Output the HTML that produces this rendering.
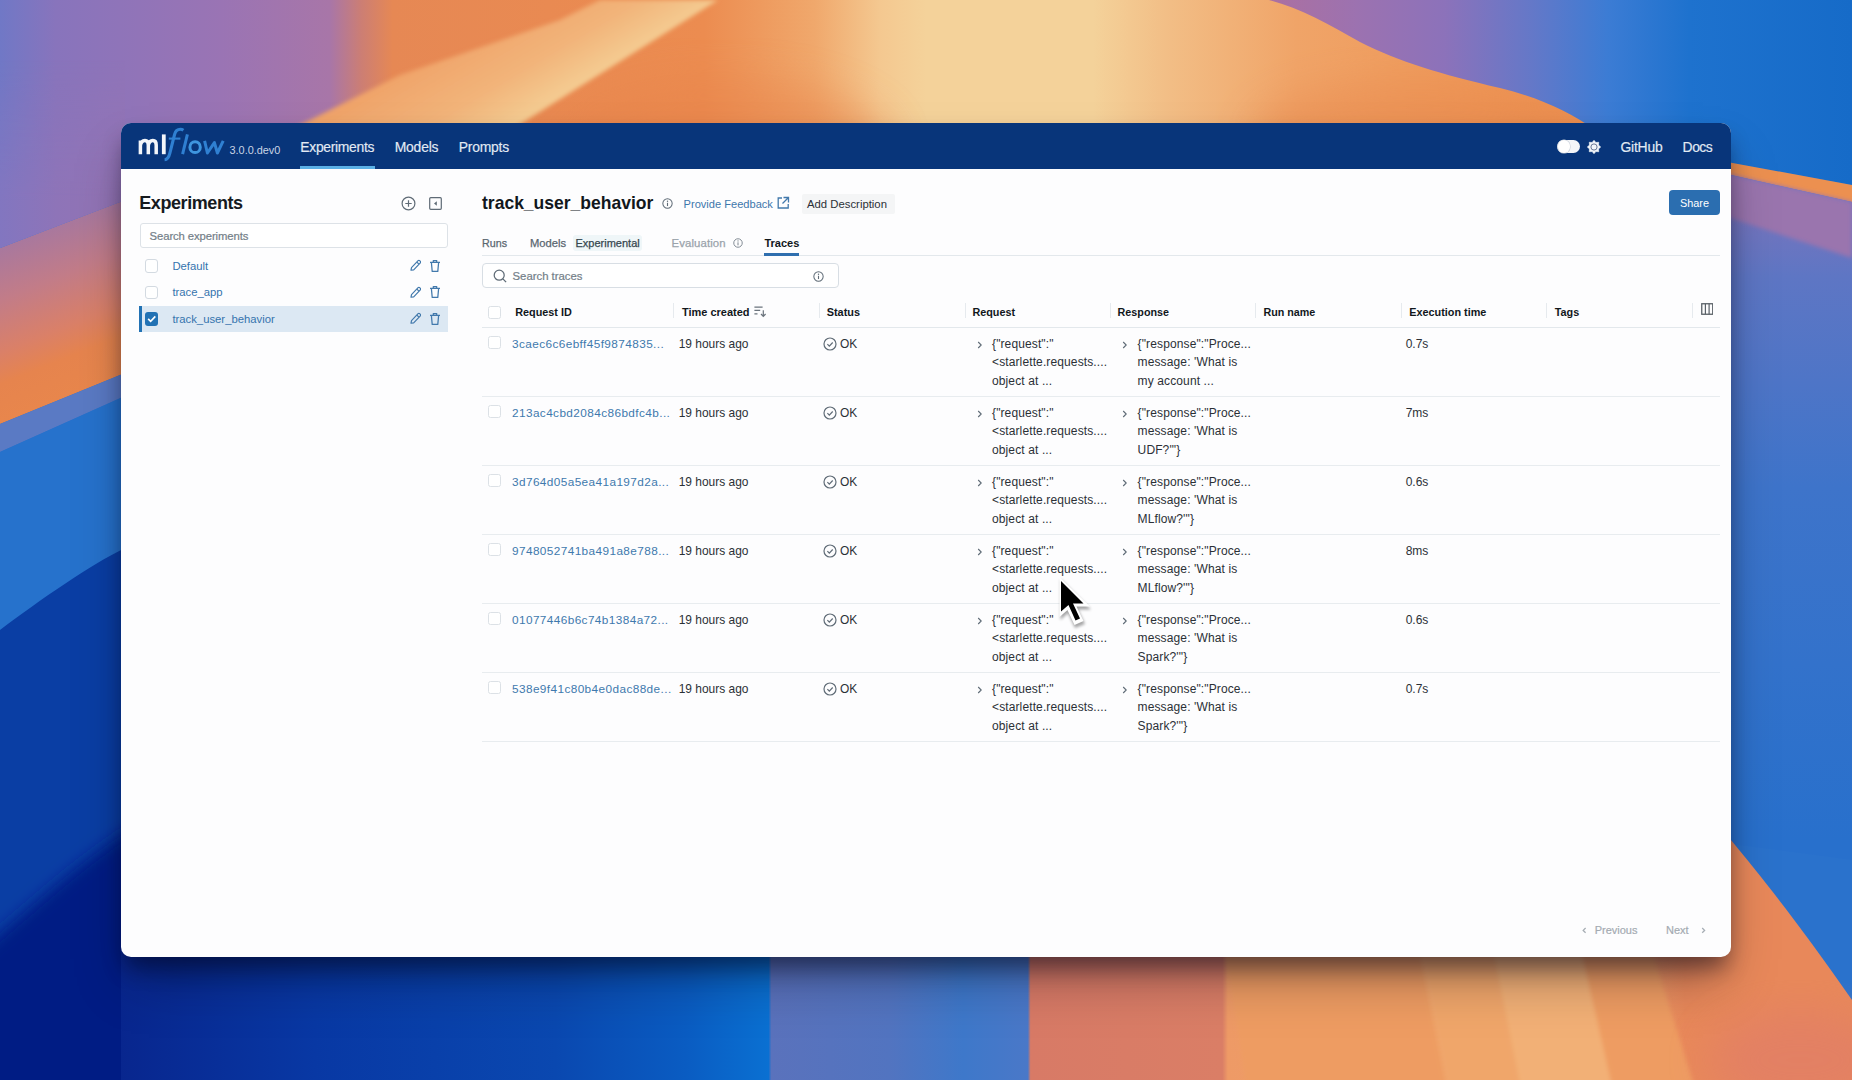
<!DOCTYPE html>
<html><head><meta charset="utf-8"><style>
html,body{margin:0;padding:0;width:1852px;height:1080px;overflow:hidden;}
body{position:relative;font-family:"Liberation Sans", sans-serif;background:#2d5fb8;}
.abs{position:absolute;}
.t{position:absolute;white-space:pre;}
#win{position:absolute;background:#FDFDFE;border-radius:10px;box-shadow:0 14px 22px -4px rgba(0,0,20,0.45), 0 30px 50px -10px rgba(0,0,20,0.35);}
#nav{position:absolute;background:#08357A;border-radius:10px 10px 0 0;}
</style></head><body>
<svg class="abs" style="left:0;top:0" width="1852" height="1080" viewBox="0 0 1852 1080">
<defs>
<filter id="b2" x="-5%" y="-5%" width="110%" height="110%"><feGaussianBlur stdDeviation="2"/></filter>
<filter id="b20" x="-30%" y="-30%" width="160%" height="160%"><feGaussianBlur stdDeviation="20"/></filter>
<filter id="b8" x="-30%" y="-30%" width="160%" height="160%"><feGaussianBlur stdDeviation="8"/></filter>
<filter id="b4" x="-5%" y="-5%" width="110%" height="110%"><feGaussianBlur stdDeviation="4"/></filter>
<linearGradient id="gTop" x1="0" y1="0" x2="1852" y2="0" gradientUnits="userSpaceOnUse">
<stop offset="0" stop-color="#7078C6"/>
<stop offset="0.03" stop-color="#8874BC"/>
<stop offset="0.12" stop-color="#9A74B4"/>
<stop offset="0.178" stop-color="#A876A8"/>
<stop offset="0.195" stop-color="#CC7E74"/>
<stop offset="0.212" stop-color="#E68854"/>
<stop offset="0.38" stop-color="#EC8C50"/>
<stop offset="0.44" stop-color="#F0A86C"/>
<stop offset="0.475" stop-color="#F4C890"/>
<stop offset="0.5" stop-color="#F4D29A"/>
<stop offset="0.59" stop-color="#F4D29A"/>
<stop offset="0.63" stop-color="#F2BE86"/>
<stop offset="0.7" stop-color="#F0A468"/>
<stop offset="0.8" stop-color="#EE9858"/>
<stop offset="0.86" stop-color="#EC9050"/>
<stop offset="1" stop-color="#EC9050"/>
</linearGradient>
<linearGradient id="gRidge" x1="1270" y1="0" x2="1852" y2="0" gradientUnits="userSpaceOnUse">
<stop offset="0" stop-color="#AC70A0"/>
<stop offset="0.15" stop-color="#9C72B0"/>
<stop offset="0.3" stop-color="#8C72BA"/>
<stop offset="0.45" stop-color="#6478C8"/>
<stop offset="0.58" stop-color="#3C7CD4"/>
<stop offset="0.72" stop-color="#1E72CE"/>
<stop offset="1" stop-color="#166BC8"/>
</linearGradient>
<linearGradient id="gBand" x1="400" y1="75" x2="450" y2="159" gradientUnits="userSpaceOnUse">
<stop offset="0" stop-color="#F0A46A"/>
<stop offset="0.6" stop-color="#F2B47A"/>
<stop offset="1" stop-color="#F4CA90"/>
</linearGradient>
<linearGradient id="gLeftTop" x1="0" y1="0" x2="125" y2="0" gradientUnits="userSpaceOnUse">
<stop offset="0" stop-color="#8276C0"/>
<stop offset="0.45" stop-color="#8E74B8"/>
<stop offset="1" stop-color="#9474B4"/>
</linearGradient>
<linearGradient id="gLeftBand" x1="0" y1="248" x2="60" y2="399" gradientUnits="userSpaceOnUse">
<stop offset="0" stop-color="#A8789E"/>
<stop offset="0.3" stop-color="#C27C88"/>
<stop offset="0.6" stop-color="#DA8068"/>
<stop offset="0.78" stop-color="#E6844E"/>
<stop offset="1" stop-color="#E8864C"/>
</linearGradient>
<linearGradient id="gBot" x1="0" y1="0" x2="1852" y2="0" gradientUnits="userSpaceOnUse">
<stop offset="0" stop-color="#061E84"/>
<stop offset="0.065" stop-color="#08268E"/>
<stop offset="0.17" stop-color="#0838A4"/>
<stop offset="0.3" stop-color="#0A48B0"/>
<stop offset="0.37" stop-color="#0A5CC2"/>
<stop offset="0.415" stop-color="#0A70D2"/>
<stop offset="0.4165" stop-color="#5A72BC"/>
<stop offset="0.48" stop-color="#5274C0"/>
<stop offset="0.52" stop-color="#3E78CA"/>
<stop offset="0.555" stop-color="#4A78C8"/>
<stop offset="0.5565" stop-color="#D87A66"/>
<stop offset="0.66" stop-color="#DA7E66"/>
<stop offset="0.663" stop-color="#EE9A66"/>
<stop offset="0.77" stop-color="#F0A46C"/>
<stop offset="0.86" stop-color="#F2A870"/>
<stop offset="0.91" stop-color="#E8885A"/>
<stop offset="1" stop-color="#E8845A"/>
</linearGradient>
<linearGradient id="gRight" x1="0" y1="200" x2="0" y2="840" gradientUnits="userSpaceOnUse">
<stop offset="0" stop-color="#7A74BC"/>
<stop offset="0.12" stop-color="#5E76C4"/>
<stop offset="0.45" stop-color="#3E74CA"/>
<stop offset="1" stop-color="#2870CC"/>
</linearGradient>
<linearGradient id="gTopL" x1="0" y1="0" x2="1852" y2="0" gradientUnits="userSpaceOnUse">
<stop offset="0" stop-color="#7078C6"/>
<stop offset="0.03" stop-color="#8874BC"/>
<stop offset="0.12" stop-color="#9A74B4"/>
</linearGradient>
<linearGradient id="gFade" x1="0" y1="60" x2="0" y2="200" gradientUnits="userSpaceOnUse">
<stop offset="0" stop-color="#000"/>
<stop offset="1" stop-color="#fff"/>
</linearGradient>
<mask id="mFade" maskUnits="userSpaceOnUse" x="0" y="0" width="200" height="300"><rect x="0" y="0" width="200" height="300" fill="url(#gFade)"/></mask>
</defs>
<!-- base blue -->
<rect x="0" y="0" width="1852" height="1080" fill="#2A72CC"/>
<!-- left strip -->
<polygon points="0,248 125,200 125,373 0,424" fill="url(#gLeftBand)"/>
<polygon points="0,424 125,373 125,396 0,452" fill="#5A7AC4"/>
<rect x="0" y="530" width="145" height="550" fill="#0A3EA4"/>
<path d="M0,452 L125,396 L125,548 C90,565 40,600 0,630 Z" fill="#2672CC"/>
<path d="M-20,950 C40,900 80,860 145,820 L145,1100 L-20,1100 Z" fill="#061E84" filter="url(#b8)"/>
<!-- right strip -->
<polygon points="1700,0 1852,0 1852,185 1700,157" fill="url(#gRidge)"/>
<polygon points="1700,157 1852,185 1852,202 1700,168" fill="#EC9050"/>
<polygon points="1700,168 1852,202 1852,860 1700,840" fill="url(#gRight)"/>
<polygon points="1700,168 1852,202 1852,258 1700,208" fill="#9A74AE" filter="url(#b2)"/>
<!-- top strip -->
<rect x="0" y="0" width="1852" height="135" fill="url(#gTop)"/>
<ellipse cx="1420" cy="135" rx="170" ry="55" fill="#E8864C" opacity="0.45" filter="url(#b20)"/>
<path d="M1269,0 C1300,8 1330,25 1360,42 C1400,62 1440,74 1500,88 C1540,98 1570,112 1595,130 L1600,135 L1852,135 L1852,0 Z" fill="url(#gRidge)"/>
<ellipse cx="720" cy="150" rx="170" ry="70" fill="#E8844C" opacity="0.5" filter="url(#b20)"/>
<polygon points="280,135 400,75 560,20 600,0 718,0 503,135" fill="url(#gBand)" filter="url(#b2)"/>
<polygon points="0,0 125,0 125,200 0,248" fill="url(#gTopL)"/>
<polygon points="0,60 125,60 125,200 0,248" fill="url(#gLeftTop)" opacity="1" mask="url(#mFade)"/>
<!-- bottom strip -->
<rect x="121" y="950" width="1610" height="130" fill="url(#gBot)"/>
<path d="M1700,820 L1731,840 C1760,875 1800,925 1852,1000 L1852,1080 L1700,1080 Z" fill="#E8885A"/>
<g filter="url(#b2)">
<polygon points="1225,945 1418,945 1446,1085 1246,1085" fill="#EE9C62"/>
<polygon points="1418,945 1492,945 1520,1085 1446,1085" fill="#F0A66A"/>
<polygon points="1492,945 1580,945 1612,1085 1520,1085" fill="#F2B076"/>
<polygon points="1580,945 1650,945 1694,1085 1612,1085" fill="#EE9C62"/>
</g>
<ellipse cx="1800" cy="1060" rx="90" ry="50" fill="#E07C6A" opacity="0.6" filter="url(#b20)"/>
</svg>

<div id="win" style="left:121px;top:123px;width:1610px;height:834px"></div>
<div id="nav" style="left:121px;top:123px;width:1610px;height:46px"></div>
<svg class="abs" style="left:130px;top:123px" width="100" height="46" viewBox="130 123 100 46">
<g fill="none" stroke-linecap="butt">
<path d="M140.4,154.2 V140.5 M140.4,145.6 C140.8,142.4 142.6,140.4 145,140.4 C147.4,140.4 148.3,142 148.3,145 V154.2 M148.3,145.4 C148.8,142.3 150.6,140.4 152.9,140.4 C155.3,140.4 156.2,142 156.2,145 V154.2" stroke="#F3F6FA" stroke-width="3.5"/>
<path d="M163.8,134.4 V154.2" stroke="#F3F6FA" stroke-width="3.8"/>
<path d="M164.6,159.8 C167.6,159.6 168.8,157.6 169.8,153.4 L174.6,134.4 C175.6,130.4 177.6,129.2 180.4,129.2 C181.6,129.2 182.6,129.6 183.4,130.2" stroke="#2F80D2" stroke-width="3.1"/>
<path d="M168.8,138.6 H180.4" stroke="#2F80D2" stroke-width="2.1"/>
<path d="M182.6,154.2 L187.4,134.4" stroke="#2F80D2" stroke-width="3"/>
<ellipse cx="195.1" cy="147.2" rx="5.2" ry="5.4" stroke="#3E95DE" stroke-width="3"/>
<path d="M204.6,140.8 L207.4,153 L214.4,142.6 L217.4,153 L223.2,140.8" stroke="#2F80D2" stroke-width="3" stroke-linejoin="round"/>
</g></svg>
<div class="t" style="left:229.50px;top:144.08px;font-size:10.9px;line-height:13.08px;color:#C9D4E4;font-weight:400;letter-spacing:0px;">3.0.0.dev0</div>
<div class="t" style="left:300.30px;top:139.04px;font-size:13.9px;line-height:16.68px;color:#E2EAF4;font-weight:400;letter-spacing:-0.31px;-webkit-text-stroke:0.15px #E2EAF4;">Experiments</div>
<div class="abs" style="left:300px;top:166px;width:74.5px;height:3px;background:#5AB0E6"></div>
<div class="t" style="left:394.70px;top:139.04px;font-size:13.9px;line-height:16.68px;color:#E2EAF4;font-weight:400;letter-spacing:-0.18px;-webkit-text-stroke:0.15px #E2EAF4;">Models</div>
<div class="t" style="left:458.70px;top:139.04px;font-size:13.9px;line-height:16.68px;color:#E2EAF4;font-weight:400;letter-spacing:-0.21px;-webkit-text-stroke:0.15px #E2EAF4;">Prompts</div>
<div class="t" style="left:1620.50px;top:139.04px;font-size:13.9px;line-height:16.68px;color:#E2EAF4;font-weight:400;letter-spacing:-0.21px;-webkit-text-stroke:0.15px #E2EAF4;">GitHub</div>
<div class="t" style="left:1682.60px;top:139.04px;font-size:13.9px;line-height:16.68px;color:#E2EAF4;font-weight:400;letter-spacing:-0.49px;-webkit-text-stroke:0.15px #E2EAF4;">Docs</div>
<div class="abs" style="left:1557px;top:139.5px;width:23px;height:13.5px;border-radius:7px;background:#F3F5F8"></div>
<div class="abs" style="left:1557.5px;top:140px;width:12.5px;height:12.5px;border-radius:50%;background:#fff;box-shadow:0 0 0 0.6px #C9D0DA"></div>
<svg class="abs" style="left:1585.9px;top:138.9px" width="16" height="16" viewBox="0 0 16 16">
<polygon points="8.00,1.30 9.88,3.47 12.74,3.26 12.53,6.12 14.70,8.00 12.53,9.88 12.74,12.74 9.88,12.53 8.00,14.70 6.12,12.53 3.26,12.74 3.47,9.88 1.30,8.00 3.47,6.12 3.26,3.26 6.12,3.47" fill="#F2F6FA" stroke="#F2F6FA" stroke-width="0.6" stroke-linejoin="round"/>
<circle cx="8" cy="8" r="3.1" fill="none" stroke="#5A6A8A" stroke-width="0.9"/></svg>
<div class="t" style="left:139.30px;top:192.76px;font-size:18px;line-height:21.599999999999998px;color:#161A1E;font-weight:700;letter-spacing:-0.43px;">Experiments</div>
<svg class="abs" style="left:401px;top:196px" width="15" height="15" viewBox="0 0 15 15">
<circle cx="7.5" cy="7.5" r="6.4" fill="none" stroke="#5F6B76" stroke-width="1.2"/>
<path d="M7.5 4.3v6.4M4.3 7.5h6.4" stroke="#5F6B76" stroke-width="1.2"/></svg>
<svg class="abs" style="left:428.5px;top:196.5px" width="13" height="13" viewBox="0 0 13 13">
<rect x="0.7" y="0.7" width="11.6" height="11.6" rx="1" fill="none" stroke="#5F6B76" stroke-width="1.2"/>
<path d="M7.8 4.2v4.6L5 6.5z" fill="#5F6B76"/></svg>
<div class="abs" style="left:139.5px;top:223.3px;width:308.5px;height:24.7px;box-sizing:border-box;border:1px solid #DDE2E7;border-radius:3px;background:#fff"></div>
<div class="t" style="left:149.60px;top:229.60px;font-size:11.3px;line-height:13.56px;color:#737E88;font-weight:400;letter-spacing:-0.1px;-webkit-text-stroke:0.2px #737E88;">Search experiments</div>
<div class="abs" style="left:145px;top:259.3px;width:13.4px;height:13.4px;box-sizing:border-box;border-radius:3px;border:1px solid #D3DAE1;background:#fff"></div>
<div class="t" style="left:172.40px;top:259.80px;font-size:11.3px;line-height:13.56px;color:#3574AE;font-weight:400;letter-spacing:0px;">Default</div>
<svg class="abs" style="left:409px;top:259px" width="12" height="13" viewBox="0 0 12 13">
<path d="M2 11.2l0.5-2.6 6.6-6.9a1.1 1.1 0 0 1 1.6 0l0.6 0.6a1.1 1.1 0 0 1 0 1.6l-6.6 6.9z" fill="none" stroke="#4279AC" stroke-width="1.2" stroke-linejoin="round"/>
<path d="M7.9 3.1l1.9 1.9" stroke="#4279AC" stroke-width="1.1"/></svg>
<svg class="abs" style="left:429px;top:258.5px" width="12" height="14" viewBox="0 0 12 14">
<path d="M1 3.4h10M4.3 3.2V1.6h3.4v1.6M2.4 3.6l0.8 8.8h5.6l0.8-8.8" fill="none" stroke="#4279AC" stroke-width="1.25" stroke-linejoin="round"/></svg>
<div class="abs" style="left:145px;top:285.8px;width:13.4px;height:13.4px;box-sizing:border-box;border-radius:3px;border:1px solid #D3DAE1;background:#fff"></div>
<div class="t" style="left:172.40px;top:286.30px;font-size:11.3px;line-height:13.56px;color:#3574AE;font-weight:400;letter-spacing:0px;">trace_app</div>
<svg class="abs" style="left:409px;top:285.5px" width="12" height="13" viewBox="0 0 12 13">
<path d="M2 11.2l0.5-2.6 6.6-6.9a1.1 1.1 0 0 1 1.6 0l0.6 0.6a1.1 1.1 0 0 1 0 1.6l-6.6 6.9z" fill="none" stroke="#4279AC" stroke-width="1.2" stroke-linejoin="round"/>
<path d="M7.9 3.1l1.9 1.9" stroke="#4279AC" stroke-width="1.1"/></svg>
<svg class="abs" style="left:429px;top:285.0px" width="12" height="14" viewBox="0 0 12 14">
<path d="M1 3.4h10M4.3 3.2V1.6h3.4v1.6M2.4 3.6l0.8 8.8h5.6l0.8-8.8" fill="none" stroke="#4279AC" stroke-width="1.25" stroke-linejoin="round"/></svg>
<div class="abs" style="left:139px;top:305.8px;width:309px;height:26.4px;background:#DCE8F3"></div>
<div class="abs" style="left:139px;top:305.8px;width:3px;height:26.4px;background:#2272B4"></div>
<div class="abs" style="left:145px;top:312.3px;width:13.4px;height:13.4px;border-radius:3px;background:#2272B4"></div>
<svg class="abs" style="left:145px;top:312.3px" width="13.4" height="13.4" viewBox="0 0 14 14"><path d="M3.3 7.2l2.6 2.6 4.9-5.2" fill="none" stroke="#fff" stroke-width="1.7"/></svg>
<div class="t" style="left:172.40px;top:312.80px;font-size:11.3px;line-height:13.56px;color:#3574AE;font-weight:400;letter-spacing:0px;">track_user_behavior</div>
<svg class="abs" style="left:409px;top:312px" width="12" height="13" viewBox="0 0 12 13">
<path d="M2 11.2l0.5-2.6 6.6-6.9a1.1 1.1 0 0 1 1.6 0l0.6 0.6a1.1 1.1 0 0 1 0 1.6l-6.6 6.9z" fill="none" stroke="#4279AC" stroke-width="1.2" stroke-linejoin="round"/>
<path d="M7.9 3.1l1.9 1.9" stroke="#4279AC" stroke-width="1.1"/></svg>
<svg class="abs" style="left:429px;top:311.5px" width="12" height="14" viewBox="0 0 12 14">
<path d="M1 3.4h10M4.3 3.2V1.6h3.4v1.6M2.4 3.6l0.8 8.8h5.6l0.8-8.8" fill="none" stroke="#4279AC" stroke-width="1.25" stroke-linejoin="round"/></svg>
<div class="t" style="left:482.00px;top:192.82px;font-size:17.52px;line-height:21.023999999999997px;color:#11171C;font-weight:700;letter-spacing:0px;">track_user_behavior</div>
<svg class="abs" style="left:661.5px;top:198.0px" width="11" height="11" viewBox="0 0 12 12"><circle cx="6" cy="6" r="5.1" fill="none" stroke="#5F6B76" stroke-width="1.1"/><path d="M6 5.2v3.6" stroke="#5F6B76" stroke-width="1.2"/><circle cx="6" cy="3.5" r="0.75" fill="#5F6B76"/></svg>
<div class="t" style="left:683.60px;top:197.80px;font-size:11.09px;line-height:13.308px;color:#3D77AC;font-weight:400;letter-spacing:0px;">Provide Feedback</div>
<svg class="abs" style="left:776px;top:196px" width="14" height="14" viewBox="0 0 14 14">
<path d="M6 2H2.2v10h10V8" fill="none" stroke="#4279AC" stroke-width="1.3"/>
<path d="M7.5 1.5h5v5M12.5 1.5L6.5 7.5" fill="none" stroke="#4279AC" stroke-width="1.3"/></svg>
<div class="abs" style="left:802px;top:194px;width:93px;height:19.5px;border-radius:2px;background:#F4F5F6"></div>
<div class="t" style="left:807.00px;top:197.58px;font-size:11.33px;line-height:13.596px;color:#2B3036;font-weight:400;letter-spacing:0px;">Add Description</div>
<div class="abs" style="left:1669.3px;top:189.8px;width:50.7px;height:25.6px;border-radius:4px;background:#2B6EB0"></div>
<div class="t" style="left:1680.00px;top:197.01px;font-size:10.87px;line-height:13.043999999999999px;color:#FFFFFF;font-weight:400;letter-spacing:0px;">Share</div>
<div class="t" style="left:482.00px;top:237.06px;font-size:10.71px;line-height:12.852px;color:#5A6670;font-weight:400;letter-spacing:0px;-webkit-text-stroke:0.25px #5A6670;">Runs</div>
<div class="t" style="left:530.00px;top:236.60px;font-size:11.2px;line-height:13.44px;color:#5A6670;font-weight:400;letter-spacing:0px;-webkit-text-stroke:0.25px #5A6670;">Models</div>
<div class="abs" style="left:573px;top:235px;width:69px;height:16px;border-radius:3px;background:#EFF6F8"></div>
<div class="t" style="left:575.50px;top:236.79px;font-size:11.0px;line-height:13.2px;color:#36474F;font-weight:400;letter-spacing:0px;-webkit-text-stroke:0.25px #36474F;">Experimental</div>
<div class="t" style="left:671.50px;top:237.01px;font-size:11.4px;line-height:13.68px;color:#9AA3AB;font-weight:400;letter-spacing:0.1px;-webkit-text-stroke:0.25px #9AA3AB;">Evaluation</div>
<svg class="abs" style="left:732.5px;top:237.6px" width="10" height="10" viewBox="0 0 12 12"><circle cx="6" cy="6" r="5.1" fill="none" stroke="#7A838C" stroke-width="1.1"/><path d="M6 5.2v3.6" stroke="#7A838C" stroke-width="1.2"/><circle cx="6" cy="3.5" r="0.75" fill="#7A838C"/></svg>
<div class="t" style="left:764.40px;top:236.75px;font-size:11.04px;line-height:13.248px;color:#11171C;font-weight:700;letter-spacing:0px;">Traces</div>
<div class="abs" style="left:482px;top:255px;width:1238px;height:1px;background:#E3E8EC"></div>
<div class="abs" style="left:764px;top:252.7px;width:35px;height:3px;background:#2F6FAF"></div>
<div class="abs" style="left:481.6px;top:262.8px;width:357px;height:25.5px;box-sizing:border-box;border:1px solid #D8DEE4;border-radius:4px;background:#fff"></div>
<svg class="abs" style="left:492.5px;top:269px" width="14" height="14" viewBox="0 0 14 14">
<circle cx="6.2" cy="6.2" r="5" fill="none" stroke="#5F6B76" stroke-width="1.25"/>
<path d="M9.9 9.9l3.2 3.2" stroke="#5F6B76" stroke-width="1.3"/></svg>
<div class="t" style="left:512.50px;top:270.06px;font-size:11.35px;line-height:13.62px;color:#737E88;font-weight:400;letter-spacing:0px;-webkit-text-stroke:0.2px #737E88;">Search traces</div>
<svg class="abs" style="left:812.5px;top:270.5px" width="11" height="11" viewBox="0 0 12 12"><circle cx="6" cy="6" r="5.1" fill="none" stroke="#5F6B76" stroke-width="1.1"/><path d="M6 5.2v3.6" stroke="#5F6B76" stroke-width="1.2"/><circle cx="6" cy="3.5" r="0.75" fill="#5F6B76"/></svg>
<div class="abs" style="left:672.8px;top:302.6px;width:1px;height:15px;background:#E6EAEE"></div>
<div class="abs" style="left:818.5px;top:302.6px;width:1px;height:15px;background:#E6EAEE"></div>
<div class="abs" style="left:964.5px;top:302.6px;width:1px;height:15px;background:#E6EAEE"></div>
<div class="abs" style="left:1109.5px;top:302.6px;width:1px;height:15px;background:#E6EAEE"></div>
<div class="abs" style="left:1254.8px;top:302.6px;width:1px;height:15px;background:#E6EAEE"></div>
<div class="abs" style="left:1401.0px;top:302.6px;width:1px;height:15px;background:#E6EAEE"></div>
<div class="abs" style="left:1546.1px;top:302.6px;width:1px;height:15px;background:#E6EAEE"></div>
<div class="abs" style="left:1691.8px;top:302.6px;width:1px;height:15px;background:#E6EAEE"></div>
<div class="abs" style="left:488.4px;top:305.8px;width:12.5px;height:12.8px;box-sizing:border-box;border-radius:2.5px;border:1px solid #DCE1E6;background:#fff"></div>
<div class="t" style="left:515.20px;top:306.34px;font-size:10.84px;line-height:13.008px;color:#11171C;font-weight:700;letter-spacing:0px;">Request ID</div>
<div class="t" style="left:682.00px;top:306.22px;font-size:10.97px;line-height:13.164px;color:#11171C;font-weight:700;letter-spacing:0px;">Time created</div>
<div class="t" style="left:826.70px;top:306.28px;font-size:10.9px;line-height:13.08px;color:#11171C;font-weight:700;letter-spacing:0px;">Status</div>
<div class="t" style="left:972.40px;top:306.38px;font-size:10.8px;line-height:12.96px;color:#11171C;font-weight:700;letter-spacing:0px;">Request</div>
<div class="t" style="left:1117.60px;top:306.43px;font-size:10.75px;line-height:12.9px;color:#11171C;font-weight:700;letter-spacing:0px;">Response</div>
<div class="t" style="left:1263.40px;top:306.43px;font-size:10.74px;line-height:12.888px;color:#11171C;font-weight:700;letter-spacing:0px;">Run name</div>
<div class="t" style="left:1409.30px;top:306.35px;font-size:10.83px;line-height:12.996px;color:#11171C;font-weight:700;letter-spacing:0px;">Execution time</div>
<div class="t" style="left:1554.80px;top:306.38px;font-size:10.8px;line-height:12.96px;color:#11171C;font-weight:700;letter-spacing:0px;">Tags</div>
<svg class="abs" style="left:752.5px;top:304px" width="14" height="14" viewBox="0 0 14 14">
<path d="M1.4 3.1h8.2M1.4 6.4h5.8M1.4 9.8h3.1" stroke="#6A737C" stroke-width="1.2"/>
<path d="M10.3 6.2v6.2M8 10l2.3 2.4 2.3-2.4" fill="none" stroke="#6A737C" stroke-width="1.2"/></svg>
<svg class="abs" style="left:1700.5px;top:303px" width="12.5" height="12" viewBox="0 0 12.5 12">
<rect x="0.75" y="0.75" width="11" height="10.5" fill="none" stroke="#5A6168" stroke-width="1.3"/>
<path d="M4.4 0.75v10.5M8.1 0.75v10.5" stroke="#5A6168" stroke-width="1.2"/></svg>
<div class="abs" style="left:482px;top:327px;width:1238px;height:1px;background:#E3E8EC"></div>
<div class="abs" style="left:488.4px;top:336.4px;width:12.5px;height:12.8px;box-sizing:border-box;border-radius:2.5px;border:1px solid #DCE1E6;background:#fff"></div>
<div class="t" style="left:512.00px;top:337.33px;font-size:11.8px;line-height:14.16px;color:#4079AD;font-weight:400;letter-spacing:0.4px;">3caec6c6ebff45f9874835...</div>
<div class="t" style="left:678.70px;top:337.18px;font-size:11.96px;line-height:14.352px;color:#2B3036;font-weight:400;letter-spacing:0px;">19 hours ago</div>
<svg class="abs" style="left:822.5px;top:336.5px" width="14" height="14" viewBox="0 0 14 14">
<circle cx="7" cy="7" r="6" fill="none" stroke="#5F6B76" stroke-width="1.2"/>
<path d="M4.4 7.2l1.9 1.9 3.4-3.6" fill="none" stroke="#5F6B76" stroke-width="1.2"/></svg>
<div class="t" style="left:840.00px;top:337.18px;font-size:11.96px;line-height:14.352px;color:#2B3036;font-weight:400;letter-spacing:0px;">OK</div>
<svg class="abs" style="left:976.5px;top:340.5px" width="6" height="8" viewBox="0 0 6 8"><path d="M1.2 1l3 3-3 3" fill="none" stroke="#5F6B76" stroke-width="1.1"/></svg>
<svg class="abs" style="left:1121.5px;top:340.5px" width="6" height="8" viewBox="0 0 6 8"><path d="M1.2 1l3 3-3 3" fill="none" stroke="#5F6B76" stroke-width="1.1"/></svg>
<div class="t" style="left:992.00px;top:337.14px;font-size:12.0px;line-height:14.399999999999999px;color:#2B3036;font-weight:400;letter-spacing:0.12px;">{"request":"</div>
<div class="t" style="left:1137.60px;top:337.14px;font-size:12.0px;line-height:14.399999999999999px;color:#2B3036;font-weight:400;letter-spacing:0.12px;">{"response":"Proce...</div>
<div class="t" style="left:992.00px;top:355.34px;font-size:12.0px;line-height:14.399999999999999px;color:#2B3036;font-weight:400;letter-spacing:0.12px;">&lt;starlette.requests....</div>
<div class="t" style="left:1137.60px;top:355.34px;font-size:12.0px;line-height:14.399999999999999px;color:#2B3036;font-weight:400;letter-spacing:0.12px;">message: 'What is</div>
<div class="t" style="left:992.00px;top:373.54px;font-size:12.0px;line-height:14.399999999999999px;color:#2B3036;font-weight:400;letter-spacing:0.12px;">object at ...</div>
<div class="t" style="left:1137.60px;top:373.54px;font-size:12.0px;line-height:14.399999999999999px;color:#2B3036;font-weight:400;letter-spacing:0.12px;">my account ...</div>
<div class="t" style="left:1405.70px;top:337.14px;font-size:12.0px;line-height:14.399999999999999px;color:#2B3036;font-weight:400;letter-spacing:0px;">0.7s</div>
<div class="abs" style="left:482px;top:396px;width:1238px;height:1px;background:#E8ECEF"></div>
<div class="abs" style="left:488.4px;top:405.4px;width:12.5px;height:12.8px;box-sizing:border-box;border-radius:2.5px;border:1px solid #DCE1E6;background:#fff"></div>
<div class="t" style="left:512.00px;top:406.33px;font-size:11.8px;line-height:14.16px;color:#4079AD;font-weight:400;letter-spacing:0.4px;">213ac4cbd2084c86bdfc4b...</div>
<div class="t" style="left:678.70px;top:406.18px;font-size:11.96px;line-height:14.352px;color:#2B3036;font-weight:400;letter-spacing:0px;">19 hours ago</div>
<svg class="abs" style="left:822.5px;top:405.5px" width="14" height="14" viewBox="0 0 14 14">
<circle cx="7" cy="7" r="6" fill="none" stroke="#5F6B76" stroke-width="1.2"/>
<path d="M4.4 7.2l1.9 1.9 3.4-3.6" fill="none" stroke="#5F6B76" stroke-width="1.2"/></svg>
<div class="t" style="left:840.00px;top:406.18px;font-size:11.96px;line-height:14.352px;color:#2B3036;font-weight:400;letter-spacing:0px;">OK</div>
<svg class="abs" style="left:976.5px;top:409.5px" width="6" height="8" viewBox="0 0 6 8"><path d="M1.2 1l3 3-3 3" fill="none" stroke="#5F6B76" stroke-width="1.1"/></svg>
<svg class="abs" style="left:1121.5px;top:409.5px" width="6" height="8" viewBox="0 0 6 8"><path d="M1.2 1l3 3-3 3" fill="none" stroke="#5F6B76" stroke-width="1.1"/></svg>
<div class="t" style="left:992.00px;top:406.14px;font-size:12.0px;line-height:14.399999999999999px;color:#2B3036;font-weight:400;letter-spacing:0.12px;">{"request":"</div>
<div class="t" style="left:1137.60px;top:406.14px;font-size:12.0px;line-height:14.399999999999999px;color:#2B3036;font-weight:400;letter-spacing:0.12px;">{"response":"Proce...</div>
<div class="t" style="left:992.00px;top:424.34px;font-size:12.0px;line-height:14.399999999999999px;color:#2B3036;font-weight:400;letter-spacing:0.12px;">&lt;starlette.requests....</div>
<div class="t" style="left:1137.60px;top:424.34px;font-size:12.0px;line-height:14.399999999999999px;color:#2B3036;font-weight:400;letter-spacing:0.12px;">message: 'What is</div>
<div class="t" style="left:992.00px;top:442.54px;font-size:12.0px;line-height:14.399999999999999px;color:#2B3036;font-weight:400;letter-spacing:0.12px;">object at ...</div>
<div class="t" style="left:1137.60px;top:442.54px;font-size:12.0px;line-height:14.399999999999999px;color:#2B3036;font-weight:400;letter-spacing:0.12px;">UDF?&#x27;&quot;}</div>
<div class="t" style="left:1405.70px;top:406.14px;font-size:12.0px;line-height:14.399999999999999px;color:#2B3036;font-weight:400;letter-spacing:0px;">7ms</div>
<div class="abs" style="left:482px;top:465px;width:1238px;height:1px;background:#E8ECEF"></div>
<div class="abs" style="left:488.4px;top:474.4px;width:12.5px;height:12.8px;box-sizing:border-box;border-radius:2.5px;border:1px solid #DCE1E6;background:#fff"></div>
<div class="t" style="left:512.00px;top:475.33px;font-size:11.8px;line-height:14.16px;color:#4079AD;font-weight:400;letter-spacing:0.4px;">3d764d05a5ea41a197d2a...</div>
<div class="t" style="left:678.70px;top:475.18px;font-size:11.96px;line-height:14.352px;color:#2B3036;font-weight:400;letter-spacing:0px;">19 hours ago</div>
<svg class="abs" style="left:822.5px;top:474.5px" width="14" height="14" viewBox="0 0 14 14">
<circle cx="7" cy="7" r="6" fill="none" stroke="#5F6B76" stroke-width="1.2"/>
<path d="M4.4 7.2l1.9 1.9 3.4-3.6" fill="none" stroke="#5F6B76" stroke-width="1.2"/></svg>
<div class="t" style="left:840.00px;top:475.18px;font-size:11.96px;line-height:14.352px;color:#2B3036;font-weight:400;letter-spacing:0px;">OK</div>
<svg class="abs" style="left:976.5px;top:478.5px" width="6" height="8" viewBox="0 0 6 8"><path d="M1.2 1l3 3-3 3" fill="none" stroke="#5F6B76" stroke-width="1.1"/></svg>
<svg class="abs" style="left:1121.5px;top:478.5px" width="6" height="8" viewBox="0 0 6 8"><path d="M1.2 1l3 3-3 3" fill="none" stroke="#5F6B76" stroke-width="1.1"/></svg>
<div class="t" style="left:992.00px;top:475.14px;font-size:12.0px;line-height:14.399999999999999px;color:#2B3036;font-weight:400;letter-spacing:0.12px;">{"request":"</div>
<div class="t" style="left:1137.60px;top:475.14px;font-size:12.0px;line-height:14.399999999999999px;color:#2B3036;font-weight:400;letter-spacing:0.12px;">{"response":"Proce...</div>
<div class="t" style="left:992.00px;top:493.34px;font-size:12.0px;line-height:14.399999999999999px;color:#2B3036;font-weight:400;letter-spacing:0.12px;">&lt;starlette.requests....</div>
<div class="t" style="left:1137.60px;top:493.34px;font-size:12.0px;line-height:14.399999999999999px;color:#2B3036;font-weight:400;letter-spacing:0.12px;">message: 'What is</div>
<div class="t" style="left:992.00px;top:511.54px;font-size:12.0px;line-height:14.399999999999999px;color:#2B3036;font-weight:400;letter-spacing:0.12px;">object at ...</div>
<div class="t" style="left:1137.60px;top:511.54px;font-size:12.0px;line-height:14.399999999999999px;color:#2B3036;font-weight:400;letter-spacing:0.12px;">MLflow?&#x27;&quot;}</div>
<div class="t" style="left:1405.70px;top:475.14px;font-size:12.0px;line-height:14.399999999999999px;color:#2B3036;font-weight:400;letter-spacing:0px;">0.6s</div>
<div class="abs" style="left:482px;top:534px;width:1238px;height:1px;background:#E8ECEF"></div>
<div class="abs" style="left:488.4px;top:543.4px;width:12.5px;height:12.8px;box-sizing:border-box;border-radius:2.5px;border:1px solid #DCE1E6;background:#fff"></div>
<div class="t" style="left:512.00px;top:544.33px;font-size:11.8px;line-height:14.16px;color:#4079AD;font-weight:400;letter-spacing:0.4px;">9748052741ba491a8e788...</div>
<div class="t" style="left:678.70px;top:544.18px;font-size:11.96px;line-height:14.352px;color:#2B3036;font-weight:400;letter-spacing:0px;">19 hours ago</div>
<svg class="abs" style="left:822.5px;top:543.5px" width="14" height="14" viewBox="0 0 14 14">
<circle cx="7" cy="7" r="6" fill="none" stroke="#5F6B76" stroke-width="1.2"/>
<path d="M4.4 7.2l1.9 1.9 3.4-3.6" fill="none" stroke="#5F6B76" stroke-width="1.2"/></svg>
<div class="t" style="left:840.00px;top:544.18px;font-size:11.96px;line-height:14.352px;color:#2B3036;font-weight:400;letter-spacing:0px;">OK</div>
<svg class="abs" style="left:976.5px;top:547.5px" width="6" height="8" viewBox="0 0 6 8"><path d="M1.2 1l3 3-3 3" fill="none" stroke="#5F6B76" stroke-width="1.1"/></svg>
<svg class="abs" style="left:1121.5px;top:547.5px" width="6" height="8" viewBox="0 0 6 8"><path d="M1.2 1l3 3-3 3" fill="none" stroke="#5F6B76" stroke-width="1.1"/></svg>
<div class="t" style="left:992.00px;top:544.14px;font-size:12.0px;line-height:14.399999999999999px;color:#2B3036;font-weight:400;letter-spacing:0.12px;">{"request":"</div>
<div class="t" style="left:1137.60px;top:544.14px;font-size:12.0px;line-height:14.399999999999999px;color:#2B3036;font-weight:400;letter-spacing:0.12px;">{"response":"Proce...</div>
<div class="t" style="left:992.00px;top:562.34px;font-size:12.0px;line-height:14.399999999999999px;color:#2B3036;font-weight:400;letter-spacing:0.12px;">&lt;starlette.requests....</div>
<div class="t" style="left:1137.60px;top:562.34px;font-size:12.0px;line-height:14.399999999999999px;color:#2B3036;font-weight:400;letter-spacing:0.12px;">message: 'What is</div>
<div class="t" style="left:992.00px;top:580.54px;font-size:12.0px;line-height:14.399999999999999px;color:#2B3036;font-weight:400;letter-spacing:0.12px;">object at ...</div>
<div class="t" style="left:1137.60px;top:580.54px;font-size:12.0px;line-height:14.399999999999999px;color:#2B3036;font-weight:400;letter-spacing:0.12px;">MLflow?&#x27;&quot;}</div>
<div class="t" style="left:1405.70px;top:544.14px;font-size:12.0px;line-height:14.399999999999999px;color:#2B3036;font-weight:400;letter-spacing:0px;">8ms</div>
<div class="abs" style="left:482px;top:603px;width:1238px;height:1px;background:#E8ECEF"></div>
<div class="abs" style="left:488.4px;top:612.4px;width:12.5px;height:12.8px;box-sizing:border-box;border-radius:2.5px;border:1px solid #DCE1E6;background:#fff"></div>
<div class="t" style="left:512.00px;top:613.33px;font-size:11.8px;line-height:14.16px;color:#4079AD;font-weight:400;letter-spacing:0.4px;">01077446b6c74b1384a72...</div>
<div class="t" style="left:678.70px;top:613.18px;font-size:11.96px;line-height:14.352px;color:#2B3036;font-weight:400;letter-spacing:0px;">19 hours ago</div>
<svg class="abs" style="left:822.5px;top:612.5px" width="14" height="14" viewBox="0 0 14 14">
<circle cx="7" cy="7" r="6" fill="none" stroke="#5F6B76" stroke-width="1.2"/>
<path d="M4.4 7.2l1.9 1.9 3.4-3.6" fill="none" stroke="#5F6B76" stroke-width="1.2"/></svg>
<div class="t" style="left:840.00px;top:613.18px;font-size:11.96px;line-height:14.352px;color:#2B3036;font-weight:400;letter-spacing:0px;">OK</div>
<svg class="abs" style="left:976.5px;top:616.5px" width="6" height="8" viewBox="0 0 6 8"><path d="M1.2 1l3 3-3 3" fill="none" stroke="#5F6B76" stroke-width="1.1"/></svg>
<svg class="abs" style="left:1121.5px;top:616.5px" width="6" height="8" viewBox="0 0 6 8"><path d="M1.2 1l3 3-3 3" fill="none" stroke="#5F6B76" stroke-width="1.1"/></svg>
<div class="t" style="left:992.00px;top:613.14px;font-size:12.0px;line-height:14.399999999999999px;color:#2B3036;font-weight:400;letter-spacing:0.12px;">{"request":"</div>
<div class="t" style="left:1137.60px;top:613.14px;font-size:12.0px;line-height:14.399999999999999px;color:#2B3036;font-weight:400;letter-spacing:0.12px;">{"response":"Proce...</div>
<div class="t" style="left:992.00px;top:631.34px;font-size:12.0px;line-height:14.399999999999999px;color:#2B3036;font-weight:400;letter-spacing:0.12px;">&lt;starlette.requests....</div>
<div class="t" style="left:1137.60px;top:631.34px;font-size:12.0px;line-height:14.399999999999999px;color:#2B3036;font-weight:400;letter-spacing:0.12px;">message: 'What is</div>
<div class="t" style="left:992.00px;top:649.54px;font-size:12.0px;line-height:14.399999999999999px;color:#2B3036;font-weight:400;letter-spacing:0.12px;">object at ...</div>
<div class="t" style="left:1137.60px;top:649.54px;font-size:12.0px;line-height:14.399999999999999px;color:#2B3036;font-weight:400;letter-spacing:0.12px;">Spark?&#x27;&quot;}</div>
<div class="t" style="left:1405.70px;top:613.14px;font-size:12.0px;line-height:14.399999999999999px;color:#2B3036;font-weight:400;letter-spacing:0px;">0.6s</div>
<div class="abs" style="left:482px;top:672px;width:1238px;height:1px;background:#E8ECEF"></div>
<div class="abs" style="left:488.4px;top:681.4px;width:12.5px;height:12.8px;box-sizing:border-box;border-radius:2.5px;border:1px solid #DCE1E6;background:#fff"></div>
<div class="t" style="left:512.00px;top:682.33px;font-size:11.8px;line-height:14.16px;color:#4079AD;font-weight:400;letter-spacing:0.4px;">538e9f41c80b4e0dac88de...</div>
<div class="t" style="left:678.70px;top:682.18px;font-size:11.96px;line-height:14.352px;color:#2B3036;font-weight:400;letter-spacing:0px;">19 hours ago</div>
<svg class="abs" style="left:822.5px;top:681.5px" width="14" height="14" viewBox="0 0 14 14">
<circle cx="7" cy="7" r="6" fill="none" stroke="#5F6B76" stroke-width="1.2"/>
<path d="M4.4 7.2l1.9 1.9 3.4-3.6" fill="none" stroke="#5F6B76" stroke-width="1.2"/></svg>
<div class="t" style="left:840.00px;top:682.18px;font-size:11.96px;line-height:14.352px;color:#2B3036;font-weight:400;letter-spacing:0px;">OK</div>
<svg class="abs" style="left:976.5px;top:685.5px" width="6" height="8" viewBox="0 0 6 8"><path d="M1.2 1l3 3-3 3" fill="none" stroke="#5F6B76" stroke-width="1.1"/></svg>
<svg class="abs" style="left:1121.5px;top:685.5px" width="6" height="8" viewBox="0 0 6 8"><path d="M1.2 1l3 3-3 3" fill="none" stroke="#5F6B76" stroke-width="1.1"/></svg>
<div class="t" style="left:992.00px;top:682.14px;font-size:12.0px;line-height:14.399999999999999px;color:#2B3036;font-weight:400;letter-spacing:0.12px;">{"request":"</div>
<div class="t" style="left:1137.60px;top:682.14px;font-size:12.0px;line-height:14.399999999999999px;color:#2B3036;font-weight:400;letter-spacing:0.12px;">{"response":"Proce...</div>
<div class="t" style="left:992.00px;top:700.34px;font-size:12.0px;line-height:14.399999999999999px;color:#2B3036;font-weight:400;letter-spacing:0.12px;">&lt;starlette.requests....</div>
<div class="t" style="left:1137.60px;top:700.34px;font-size:12.0px;line-height:14.399999999999999px;color:#2B3036;font-weight:400;letter-spacing:0.12px;">message: 'What is</div>
<div class="t" style="left:992.00px;top:718.54px;font-size:12.0px;line-height:14.399999999999999px;color:#2B3036;font-weight:400;letter-spacing:0.12px;">object at ...</div>
<div class="t" style="left:1137.60px;top:718.54px;font-size:12.0px;line-height:14.399999999999999px;color:#2B3036;font-weight:400;letter-spacing:0.12px;">Spark?&#x27;&quot;}</div>
<div class="t" style="left:1405.70px;top:682.14px;font-size:12.0px;line-height:14.399999999999999px;color:#2B3036;font-weight:400;letter-spacing:0px;">0.7s</div>
<div class="abs" style="left:482px;top:741px;width:1238px;height:1px;background:#E8ECEF"></div>
<svg class="abs" style="left:1580.5px;top:926px" width="7" height="9" viewBox="0 0 7 9"><path d="M4.6 2L2.2 4.4 4.6 6.8" fill="none" stroke="#A6ADB4" stroke-width="1.3"/></svg>
<div class="t" style="left:1594.70px;top:923.59px;font-size:11.0px;line-height:13.2px;color:#A4ABB2;font-weight:400;letter-spacing:0px;-webkit-text-stroke:0.2px #A4ABB2;">Previous</div>
<div class="t" style="left:1666.00px;top:923.59px;font-size:11.0px;line-height:13.2px;color:#A4ABB2;font-weight:400;letter-spacing:0px;-webkit-text-stroke:0.2px #A4ABB2;">Next</div>
<svg class="abs" style="left:1699.5px;top:926px" width="7" height="9" viewBox="0 0 7 9"><path d="M2.2 2l2.4 2.4L2.2 6.8" fill="none" stroke="#A6ADB4" stroke-width="1.3"/></svg>
<svg class="abs" style="left:1050.5px;top:571px" width="50" height="62" viewBox="1050 570 50 62">
<defs><filter id="cs" x="-30%" y="-30%" width="160%" height="160%"><feGaussianBlur stdDeviation="1.6"/></filter></defs>
<polygon points="1059.5,578 1059.5,619 1067,612 1074,627 1084,623 1077,608.5 1090,608.5" fill="#000" opacity="0.35" filter="url(#cs)"/>
<polygon points="1058.5,576 1058.5,616 1066.5,609 1073.5,624 1082.5,620 1075.5,605.5 1089,605.5" fill="#fff"/>
<polygon points="1060,580 1060,610.5 1067.5,604 1074.5,619.5 1079,617.5 1072,602.5 1082.5,602.5" fill="#000"/>
</svg>
</body></html>
